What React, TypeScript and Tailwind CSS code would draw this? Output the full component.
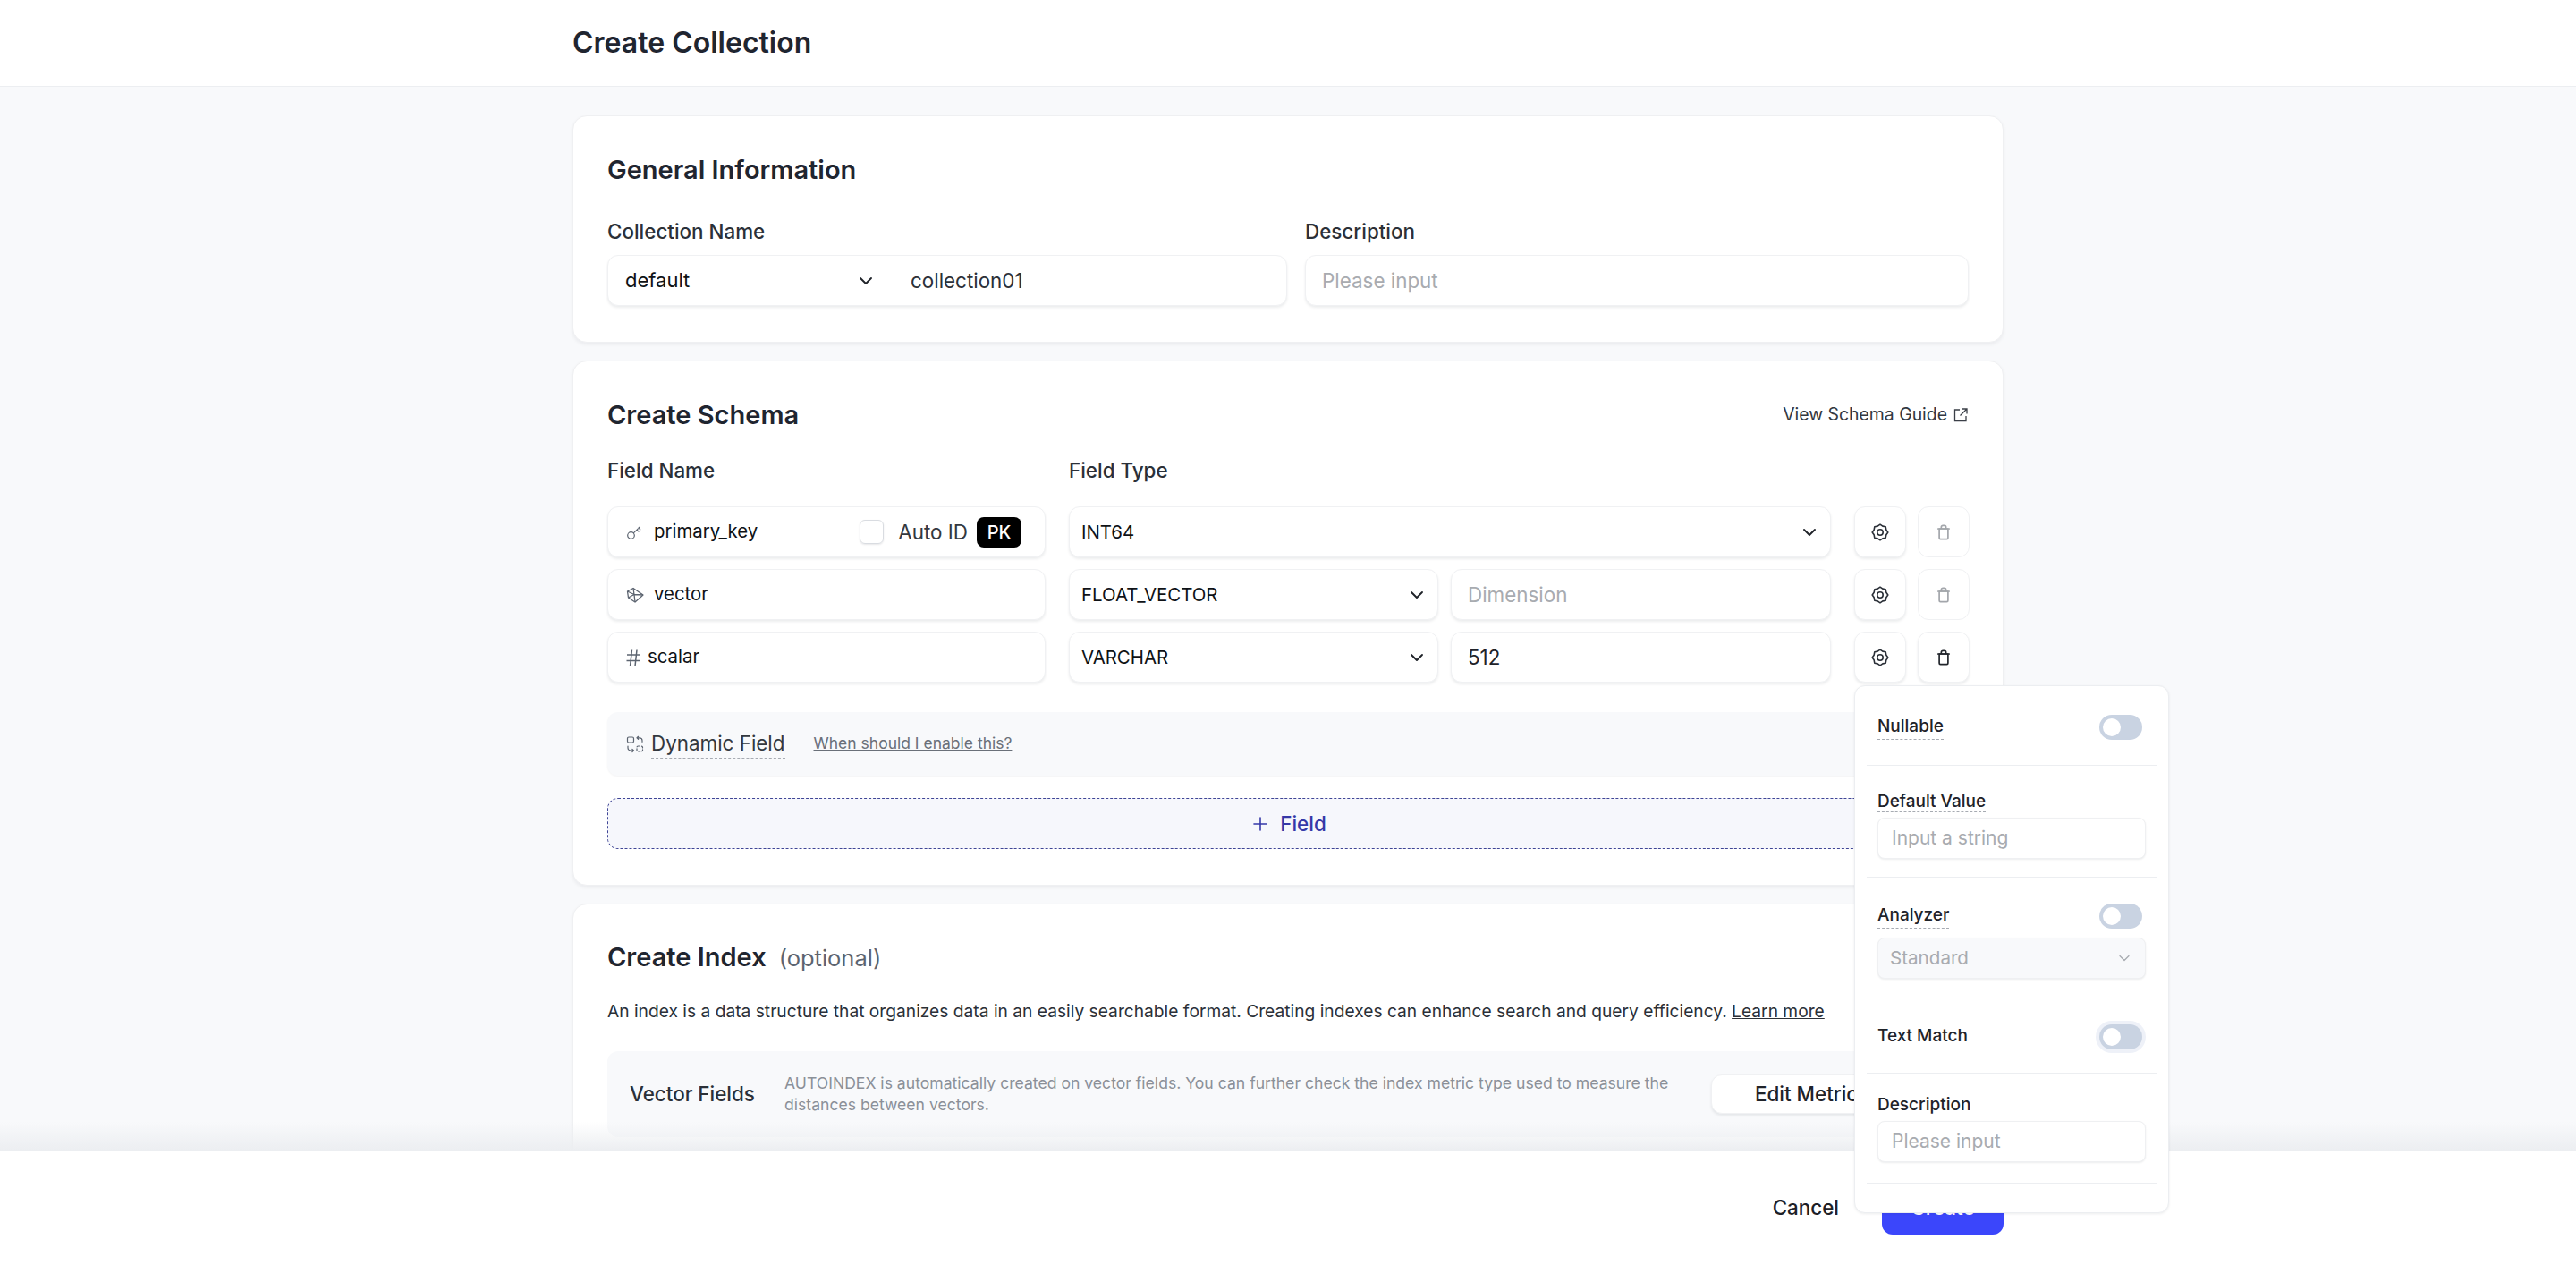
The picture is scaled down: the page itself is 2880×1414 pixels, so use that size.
import { ChevronDown, Plus } from "lucide-react";
import React, { FC, ReactNode } from "react";

const fieldBox = "rounded-xl border border-[#f0f1f3] bg-white shadow-[0_2px_3px_rgba(16,24,40,0.08)]";

const gearPoints = Array.from({ length: 16 }, (_, i) => {
    const angle = (i * Math.PI) / 8;
    const radius = i % 2 === 0 ? 8.8 : 7.4;
    return `${(10 + radius * Math.sin(angle)).toFixed(2)},${(10 - radius * Math.cos(angle)).toFixed(2)}`;
}).join(" ");

const GearIcon: FC = () => (
    <svg width="20" height="20" viewBox="0 0 20 20" fill="none" stroke="#2b3038" strokeWidth="1.6" strokeLinejoin="round">
        <polygon points={gearPoints} />
        <circle cx="10" cy="10" r="3.2" />
    </svg>
);

const TrashIcon: FC<{ muted?: boolean }> = ({ muted }) => (
    <svg width="16" height="18" viewBox="0 0 18 20" fill="none" stroke={muted ? "#a3a6ab" : "#22262c"} strokeWidth="1.9" strokeLinejoin="round" strokeLinecap="round">
        <path d="M3.5 5.500h11v11.500a1.500 1.500 0 0 1-1.500 1.500h-8a1.500 1.500 0 0 1-1.500-1.500z" />
        <path d="M2 5.500h14M6 5.500v-2a2 2 0 0 1 2-2h2a2 2 0 0 1 2 2v2" />
    </svg>
);

const KeyIcon: FC = () => (
    <svg width="18" height="18" viewBox="0 0 18 18" fill="none" stroke="#5c6470" strokeWidth="1.2" strokeLinecap="round">
        <circle cx="5.5" cy="12.500" r="3.800" />
        <path d="M8.300 9.800l7-7M12 6.200l2 2M14 4l1.800 1.800" />
    </svg>
);

const VectorIcon: FC = () => (
    <svg width="20" height="20" viewBox="0 0 20 20" fill="none" stroke="#5c6470" strokeWidth="1.3" strokeLinejoin="round">
        <path d="M8 2.500l11 7.500-9 8-7.500-5L1.500 6z" />
        <path d="M1.500 6l7.500 3.500L8 2.500M9 9.500l10 .5M9 9.500L10 18M9 9.500l-6.500 3.500" />
    </svg>
);

const HashIcon: FC = () => (
    <svg width="16" height="22" viewBox="0 0 16 22" fill="none" stroke="#5c6470" strokeWidth="1.5">
        <path d="M1 8h14.500M.5 14.500h14.500M6.500 2.500l-2 18M12 2.500l-2 18" />
    </svg>
);

const DynamicIcon: FC = () => (
    <svg width="20" height="20" viewBox="0 0 20 20" fill="none" stroke="#5c6470" strokeWidth="1.2" strokeLinecap="round">
        <rect x="1.5" y="2" width="7" height="6" rx="1.5" />
        <path d="M12 2.800h3a3 3 0 0 1 3 3v1.500M12 2.800l1.600-1.500M12 2.800l1.600 1.500M8.500 17H5a3 3 0 0 1-3-3v-2M8.500 17l-1.600-1.500M8.500 17l-1.600 1.500" />
        <rect x="12" y="12" width="6.500" height="6" rx="1.500" strokeDasharray="2 2" />
    </svg>
);

const ExternalIcon: FC = () => (
    <svg width="18" height="18" viewBox="0 0 18 18" fill="none" stroke="#3a3f47" strokeWidth="1.3">
        <path d="M8 3H2.500v12.500H15V10M10.500 2h5.500v5.500M16 2L8.500 9.500" />
    </svg>
);

const Card: FC<{ className?: string; children: ReactNode }> = ({ className, children }) => (
    <section className={`rounded-2xl border border-[#eff0f2] bg-white px-[38px] shadow-[0_2px_4px_rgba(16,24,40,0.06)] ${className ?? ""}`}>
        {children}
    </section>
);

const Chevron: FC = () => <ChevronDown size={24} strokeWidth={1.9} className="text-[#1f2329]" />;

type Row = {
    icon: ReactNode;
    name: string;
    type: string;
    value?: string;
    placeholder?: string;
    primary?: boolean;
    locked?: boolean;
    narrowIcon?: boolean;
};

const rows: Row[] = [
    { icon: <KeyIcon />, name: "primary_key", type: "INT64", primary: true, locked: true },
    { icon: <VectorIcon />, name: "vector", type: "FLOAT_VECTOR", placeholder: "Dimension", locked: true },
    { icon: <HashIcon />, name: "scalar", type: "VARCHAR", value: "512", narrowIcon: true },
];

const FieldRow: FC<{ row: Row }> = ({ row }) => (
    <div className="flex">
        <div className={`${fieldBox} mr-[26px] flex h-[57px] w-[490px] shrink-0 items-center pl-[20px] pr-[26px]`}>
            <span className={`flex shrink-0 items-center ${row.narrowIcon ? "w-[24px]" : "w-[31px]"}`}>{row.icon}</span>
            <span className="text-[20.4px] text-[#0f1216]">{row.name}</span>
            {row.primary && (
                <div className="ml-auto flex items-center">
                    <span className="mr-[16px] h-[27px] w-[27px] rounded-md border border-[#d9dce1] shadow-[0_1px_2px_rgba(16,24,40,0.1)]" />
                    <span className="mr-[10px] text-[22.4px] text-[#333840]">Auto ID</span>
                    <span className="flex h-[34px] w-[50px] items-center justify-center rounded-lg bg-black text-[20px] font-medium text-white">PK</span>
                </div>
            )}
        </div>
        <div className="flex w-[852px] shrink-0 gap-[14px]">
            <div className={`${fieldBox} flex h-[57px] items-center justify-between pl-[13px] pr-[11px] ${row.primary ? "w-full" : "w-[413px] shrink-0"}`}>
                <span className="pt-[2px] text-[20.4px] text-[#0f1216]">{row.type}</span>
                <Chevron />
            </div>
            {!row.primary && (
                <div className={`${fieldBox} flex h-[57px] flex-1 items-center pl-[18px]`}>
                    <span className={`pt-[1px] text-[22.4px] ${row.value ? "text-[#1f2329]" : "text-[#a8abb0]"}`}>{row.value ?? row.placeholder}</span>
                </div>
            )}
        </div>
        <div className="ml-[26px] flex gap-[13px]">
            <button className={`${fieldBox} flex h-[57px] w-[58px] items-center justify-center`}>
                <GearIcon />
            </button>
            <button className={`flex h-[57px] w-[58px] items-center justify-center rounded-xl border border-[#f0f1f3] bg-white ${row.locked ? "" : "shadow-[0_2px_3px_rgba(16,24,40,0.08)]"}`}>
                <TrashIcon muted={row.locked} />
            </button>
        </div>
    </div>
);

const HintLabel: FC<{ children: ReactNode }> = ({ children }) => (
    <span className="border-b border-dashed border-[#a7abb2] text-[19px] font-medium leading-[28px] text-[#1f2329]">{children}</span>
);

const Toggle: FC<{ focus?: boolean }> = ({ focus }) => (
    <span className={`flex h-[28px] w-[48px] items-center rounded-full bg-[#c9d3e2] pl-[4px] ${focus ? "shadow-[0_0_0_4px_#eef1f8]" : ""}`}>
        <span className="h-[20px] w-[20px] rounded-full bg-white" />
    </span>
);

const PopInput: FC<{ text: string }> = ({ text }) => (
    <div className="mt-[4px] flex h-[46px] items-center rounded-lg border border-[#eff0f2] bg-white pl-[15px] text-[21px] text-[#a8abb0] shadow-[0_1px_2px_rgba(16,24,40,0.08)]">
        {text}
    </div>
);

const Divider: FC = () => <div className="mx-[-12px] h-px bg-[#eceef1]" />;

const FieldSettings: FC = () => (
    <div className="absolute left-[2073px] top-[766px] z-20 h-[590px] w-[352px] rounded-xl border border-[#eceef1] bg-white px-[25px] shadow-[0_1px_3px_rgba(16,24,40,0.08)]">
        <div className="flex h-[88px] items-center justify-between pt-[3px]">
            <HintLabel>Nullable</HintLabel>
            <span className="mr-[4px]"><Toggle /></span>
        </div>
        <Divider />
        <div className="h-[124px] pt-[26px]">
            <HintLabel>Default Value</HintLabel>
            <PopInput text="Input a string" />
        </div>
        <Divider />
        <div className="h-[134px] pt-[28px]">
            <div className="flex items-center justify-between">
                <HintLabel>Analyzer</HintLabel>
                <span className="mr-[4px]"><Toggle /></span>
            </div>
            <div className="mt-[10px] flex h-[46px] items-center justify-between rounded-lg border border-[#eff0f2] bg-[#f8f9fb] px-[13px] text-[20.6px] text-[#a8abb0] shadow-[0_1px_2px_rgba(16,24,40,0.08)]">
                Standard
                <ChevronDown size={20} strokeWidth={1.5} className="text-[#a8abb0]" />
            </div>
        </div>
        <Divider />
        <div className="flex h-[83px] items-center justify-between pt-[2px]">
            <HintLabel>Text Match</HintLabel>
            <span className="mr-[4px]"><Toggle focus /></span>
        </div>
        <Divider />
        <div className="h-[122px] pt-[21px]">
            <span className="text-[19px] font-medium leading-[28px] text-[#1f2329]">Description</span>
            <PopInput text="Please input" />
        </div>
        <Divider />
    </div>
);

export default function App() {
    return (
        <div className="relative flex h-[1414px] flex-col overflow-hidden bg-[#f8f9fb] font-['Inter',sans-serif]">
            <header className="h-[97px] shrink-0 border-b border-[#eceef1] bg-white pl-[640px] pt-[26px]">
                <h1 className="text-[32px] font-semibold leading-[44px] text-[#1f2530]">Create Collection</h1>
            </header>

            <main className="relative min-h-0 flex-1 overflow-hidden">
                <div className="mx-auto flex w-[1600px] flex-col gap-[20px] pt-[32px]">
                    <Card className="h-[254px] pt-[40px]">
                        <h2 className="text-[29px] font-semibold leading-[40px] text-[#1f2530]">General Information</h2>
                        <div className="mt-[33px] flex gap-[20px]">
                            <div className="w-[760px]">
                                <p className="text-[22.4px] font-medium leading-[32px] text-[#2b3038]">Collection Name</p>
                                <div className={`${fieldBox} mt-[10px] flex h-[57px]`}>
                                    <div className="flex w-[320px] items-center justify-between border-r border-[#e6e8eb] pl-[19px] pr-[19px]">
                                        <span className="text-[22px] text-[#0f1216]">default</span>
                                        <Chevron />
                                    </div>
                                    <div className="flex flex-1 items-center pl-[18px] pt-[1px] text-[22.4px] text-[#2b3038]">collection01</div>
                                </div>
                            </div>
                            <div className="flex-1">
                                <p className="text-[22.4px] font-medium leading-[32px] text-[#2b3038]">Description</p>
                                <div className={`${fieldBox} mt-[10px] flex h-[57px] items-center pl-[18px] pt-[1px] text-[22.4px] text-[#a8abb0]`}>Please input</div>
                            </div>
                        </div>
                    </Card>

                    <Card className="h-[587px] pt-[38px]">
                        <div className="flex items-center justify-between">
                            <h2 className="text-[29px] font-semibold leading-[44px] text-[#1f2530]">Create Schema</h2>
                            <a className="flex items-center gap-[6px] text-[19.400px] text-[#33383f]">
                                View Schema Guide
                                <ExternalIcon />
                            </a>
                        </div>
                        <div className="mt-[24px] flex text-[22.4px] font-medium leading-[32px] text-[#2b3038]">
                            <span className="w-[516px]">Field Name</span>
                            <span>Field Type</span>
                        </div>
                        <div className="mt-[24px] flex flex-col gap-[13px]">
                            {rows.map((row) => (
                                <FieldRow key={row.name} row={row} />
                            ))}
                        </div>
                        <div className="mt-[33px] flex h-[71px] items-center rounded-xl bg-[#f8f9fb] pl-[21px] shadow-[0_1px_2px_rgba(16,24,40,0.05)]">
                            <DynamicIcon />
                            <span className="ml-[8px] border-b border-dashed border-[#a7abb2] text-[22.4px] leading-[32px] text-[#33383f]">Dynamic Field</span>
                            <a className="ml-[32px] text-[17.5px] text-[#6a7079] underline">When should I enable this?</a>
                        </div>
                        <button className="mt-[25px] flex h-[57px] w-full items-center justify-center gap-[10px] rounded-xl border border-dashed border-[#3f4596] bg-[#f6f7fc] text-[22.4px] font-medium text-[#3538a8]">
                            <Plus size={24} strokeWidth={1.6} />
                            Field
                        </button>
                    </Card>

                    <Card className="h-[400px] pt-[37px]">
                        <div className="flex items-baseline">
                            <h2 className="text-[29px] font-semibold leading-[44px] text-[#1f2530]">Create Index</h2>
                            <span className="ml-[14px] text-[25.5px] text-[#5c6470]">(optional)</span>
                        </div>
                        <p className="mt-[22px] text-[19.2px] leading-[32px] text-[#2b3038]">
                            An index is a data structure that organizes data in an easily searchable format. Creating indexes can enhance search and query efficiency. <a className="underline">Learn more</a>
                        </p>
                        <div className="mt-[29px] flex h-[96px] items-center rounded-xl bg-[#f8f9fb] pl-[25px]">
                            <span className="w-[173px] shrink-0 text-[22.4px] font-medium text-[#2b3038]">Vector Fields</span>
                            <p className="w-[1010px] shrink-0 text-[17.6px] leading-[24px] text-[#8b9098]">
                                AUTOINDEX is automatically created on vector fields. You can further check the index metric type used to measure the distances between vectors.
                            </p>
                            <button className={`${fieldBox} ml-[26px] h-[44px] w-[260px] whitespace-nowrap pl-[48px] text-left text-[22.4px] font-medium text-[#1f2329]`}>Edit Metric Type</button>
                        </div>
                    </Card>
                </div>
                <div className="absolute inset-x-0 bottom-0 h-[32px] bg-gradient-to-b from-transparent to-[#eceef1]" />
            </main>

            <footer className="flex h-[128px] shrink-0 items-start justify-end border-t border-[#eceef1] bg-white pr-[640px] pt-[33px]">
                <button className="mr-[48px] h-[60px] text-[22.4px] font-medium text-[#1d2027]">Cancel</button>
                <button className="h-[60px] w-[136px] rounded-xl bg-[#3b46fb] text-[22.4px] font-medium text-white">Create</button>
            </footer>

            <FieldSettings />
        </div>
    );
}
